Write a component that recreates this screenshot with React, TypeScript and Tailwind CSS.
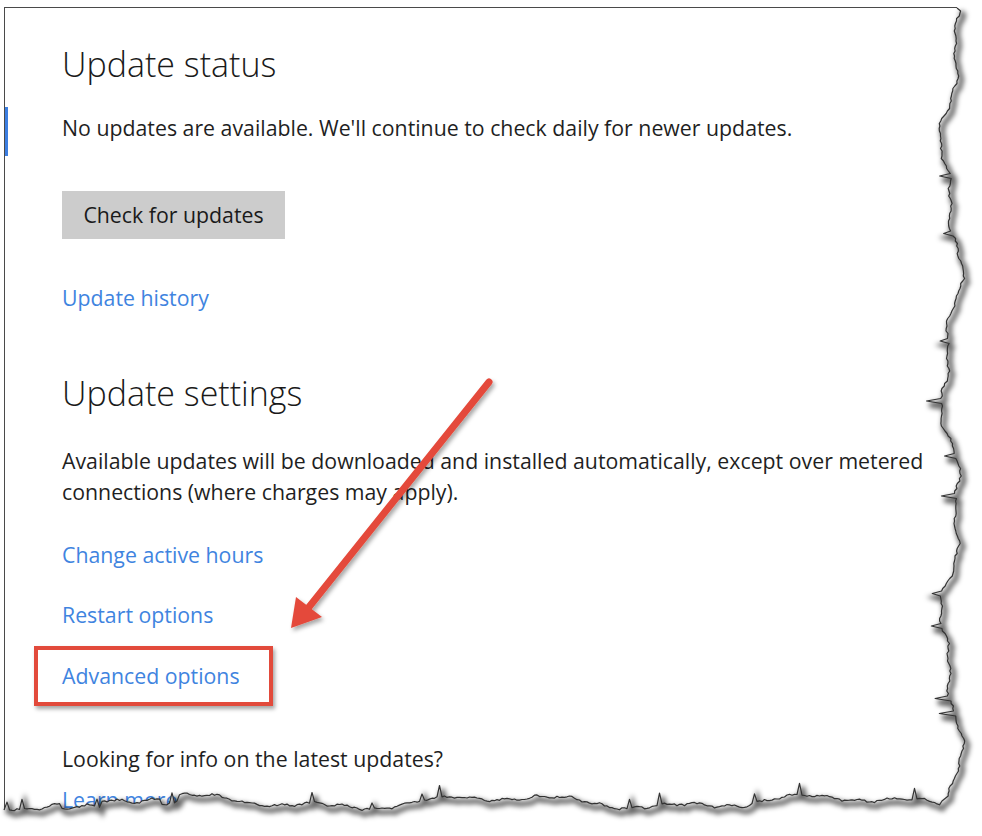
import React from "react";

function mulberry32(a: number) {
  return function () {
    a |= 0;
    a = (a + 0x6d2b79f5) | 0;
    let t = Math.imul(a ^ (a >>> 15), 1 | a);
    t = (t + Math.imul(t ^ (t >>> 7), 61 | t)) ^ t;
    return ((t ^ (t >>> 14)) >>> 0) / 4294967296;
  };
}

function buildEdge() {
  const rnd = mulberry32(11);
  const pts: [number, number][] = [];
  pts.push([957, 8]);
  let spike = 0;
  for (let y = 11; y <= 796; y += 2.5) {
    let x =
      951 +
      8 * Math.sin(y / 38 + 0.8) +
      4 * Math.sin(y / 15 + 2.1) +
      1.5 * Math.sin(y / 5.3) +
      (rnd() - 0.5) * 2;
    if (spike > 0) {
      spike--;
    } else if (rnd() < 0.025) {
      x -= 8 + rnd() * 7;
      spike = 4;
    }
    pts.push([x, y]);
  }
  const cornerX = 942;
  const cornerY = 801;
  pts.push([cornerX, cornerY]);
  for (let x = cornerX - 2.5; x >= 4; x -= 2.5) {
    let y =
      802 +
      5 * Math.sin(x / 52 + 1.3) +
      3 * Math.sin(x / 19 + 0.4) +
      1.2 * Math.sin(x / 5.1) +
      (rnd() - 0.5) * 2;
    // let the start of "Learn more" show through like the reference
    if (x > 60 && x < 100) y += 6;
    if (x > 160 && x < 178) y += 5;
    if (spike > 0) {
      spike--;
    } else if (rnd() < 0.025) {
      y -= 6 + rnd() * 7;
      spike = 4;
    }
    pts.push([x, y]);
  }
  pts.push([4, 810]);
  const line = pts.map((p, i) => `${i ? "L" : "M"}${p[0].toFixed(1)} ${p[1].toFixed(1)}`).join(" ");
  const mask = `${line} L0 810 L0 836 L982 836 L982 0 L957 0 Z`;
  return { line, mask };
}

const edge = buildEdge();

const font = { fontFamily: '"Segoe UI", "Open Sans", "Noto Sans", sans-serif' };

export default function App() {
  return (
    <div className="relative w-[982px] h-[836px] bg-white overflow-hidden" style={font}>
      <div className="pt-[7px] pl-[4px]">
        <div className="relative w-[965px] h-[820px] border-l border-t border-[#4a4a4a] pl-[57px] text-[#1f1f1f]">
          <div className="absolute left-0 top-[99px] w-[3px] h-[49px] bg-[#3c7ee0]" />
          <h1 className="mt-[36px] text-[34px] leading-[40px] font-light text-[#1a1a1a]">Update status</h1>
          <p className="mt-[29px] text-[21.3px] leading-[30px]">
            No updates are available. We'll continue to check daily for newer updates.
          </p>
          <button className="mt-[48px] h-[48px] w-[223px] bg-[#cccccc] text-[21.3px] text-[#1a1a1a] flex items-center justify-center">
            Check for updates
          </button>
          <div className="mt-[44px] text-[21.3px] leading-[30px] text-[#3f84df]">Update history</div>
          <h2 className="mt-[60px] text-[34px] leading-[40px] font-light text-[#1a1a1a]">Update settings</h2>
          <p className="mt-[32px] text-[21.3px] leading-[31px]">
            Available updates will be downloaded and installed automatically, except over metered
            <br />
            connections (where charges may apply).
          </p>
          <div className="mt-[33px] text-[21.3px] leading-[30px] text-[#3f84df]">Change active hours</div>
          <div className="mt-[30px] text-[21.3px] leading-[30px] text-[#3f84df]">Restart options</div>
          <div className="mt-[31px] text-[21.3px] leading-[30px] text-[#3f84df]">
            <span className="relative inline-block">
              Advanced options
              <span className="absolute left-[-28px] right-[-33px] top-[-15px] bottom-[-15px] border-[4px] border-[#e24a3b] shadow-[2px_3px_4px_rgba(0,0,0,0.35)]" />
            </span>
          </div>
          <p className="mt-[53px] text-[21.3px] leading-[30px]">Looking for info on the latest updates?</p>
          <div className="mt-[11px] text-[21.3px] leading-[30px] text-[#3f84df]">Learn more</div>
        </div>
      </div>

      <svg className="absolute inset-0 pointer-events-none" width="982" height="836" viewBox="0 0 982 836">
        <defs>
          <filter id="blur" x="-10%" y="-10%" width="120%" height="120%">
            <feGaussianBlur stdDeviation="2.5" />
          </filter>
          <filter id="ashadow" x="-20%" y="-20%" width="140%" height="140%">
            <feDropShadow dx="2" dy="3" stdDeviation="2" floodColor="#000" floodOpacity="0.35" />
          </filter>
        </defs>
        <path d={edge.mask} fill="#ffffff" />
        <path d={edge.line} fill="none" stroke="#000" strokeOpacity="0.6" strokeWidth="5" filter="url(#blur)" transform="translate(3 4)" />
        <path d={edge.line} fill="none" stroke="#333333" strokeWidth="1.2" strokeLinejoin="round" />
        <g filter="url(#ashadow)">
          <line x1="489" y1="382" x2="305" y2="612" stroke="#e4493a" strokeWidth="7" strokeLinecap="round" />
          <polygon points="291,628 296,597 322,617" fill="#e4493a" />
        </g>
      </svg>
    </div>
  );
}
